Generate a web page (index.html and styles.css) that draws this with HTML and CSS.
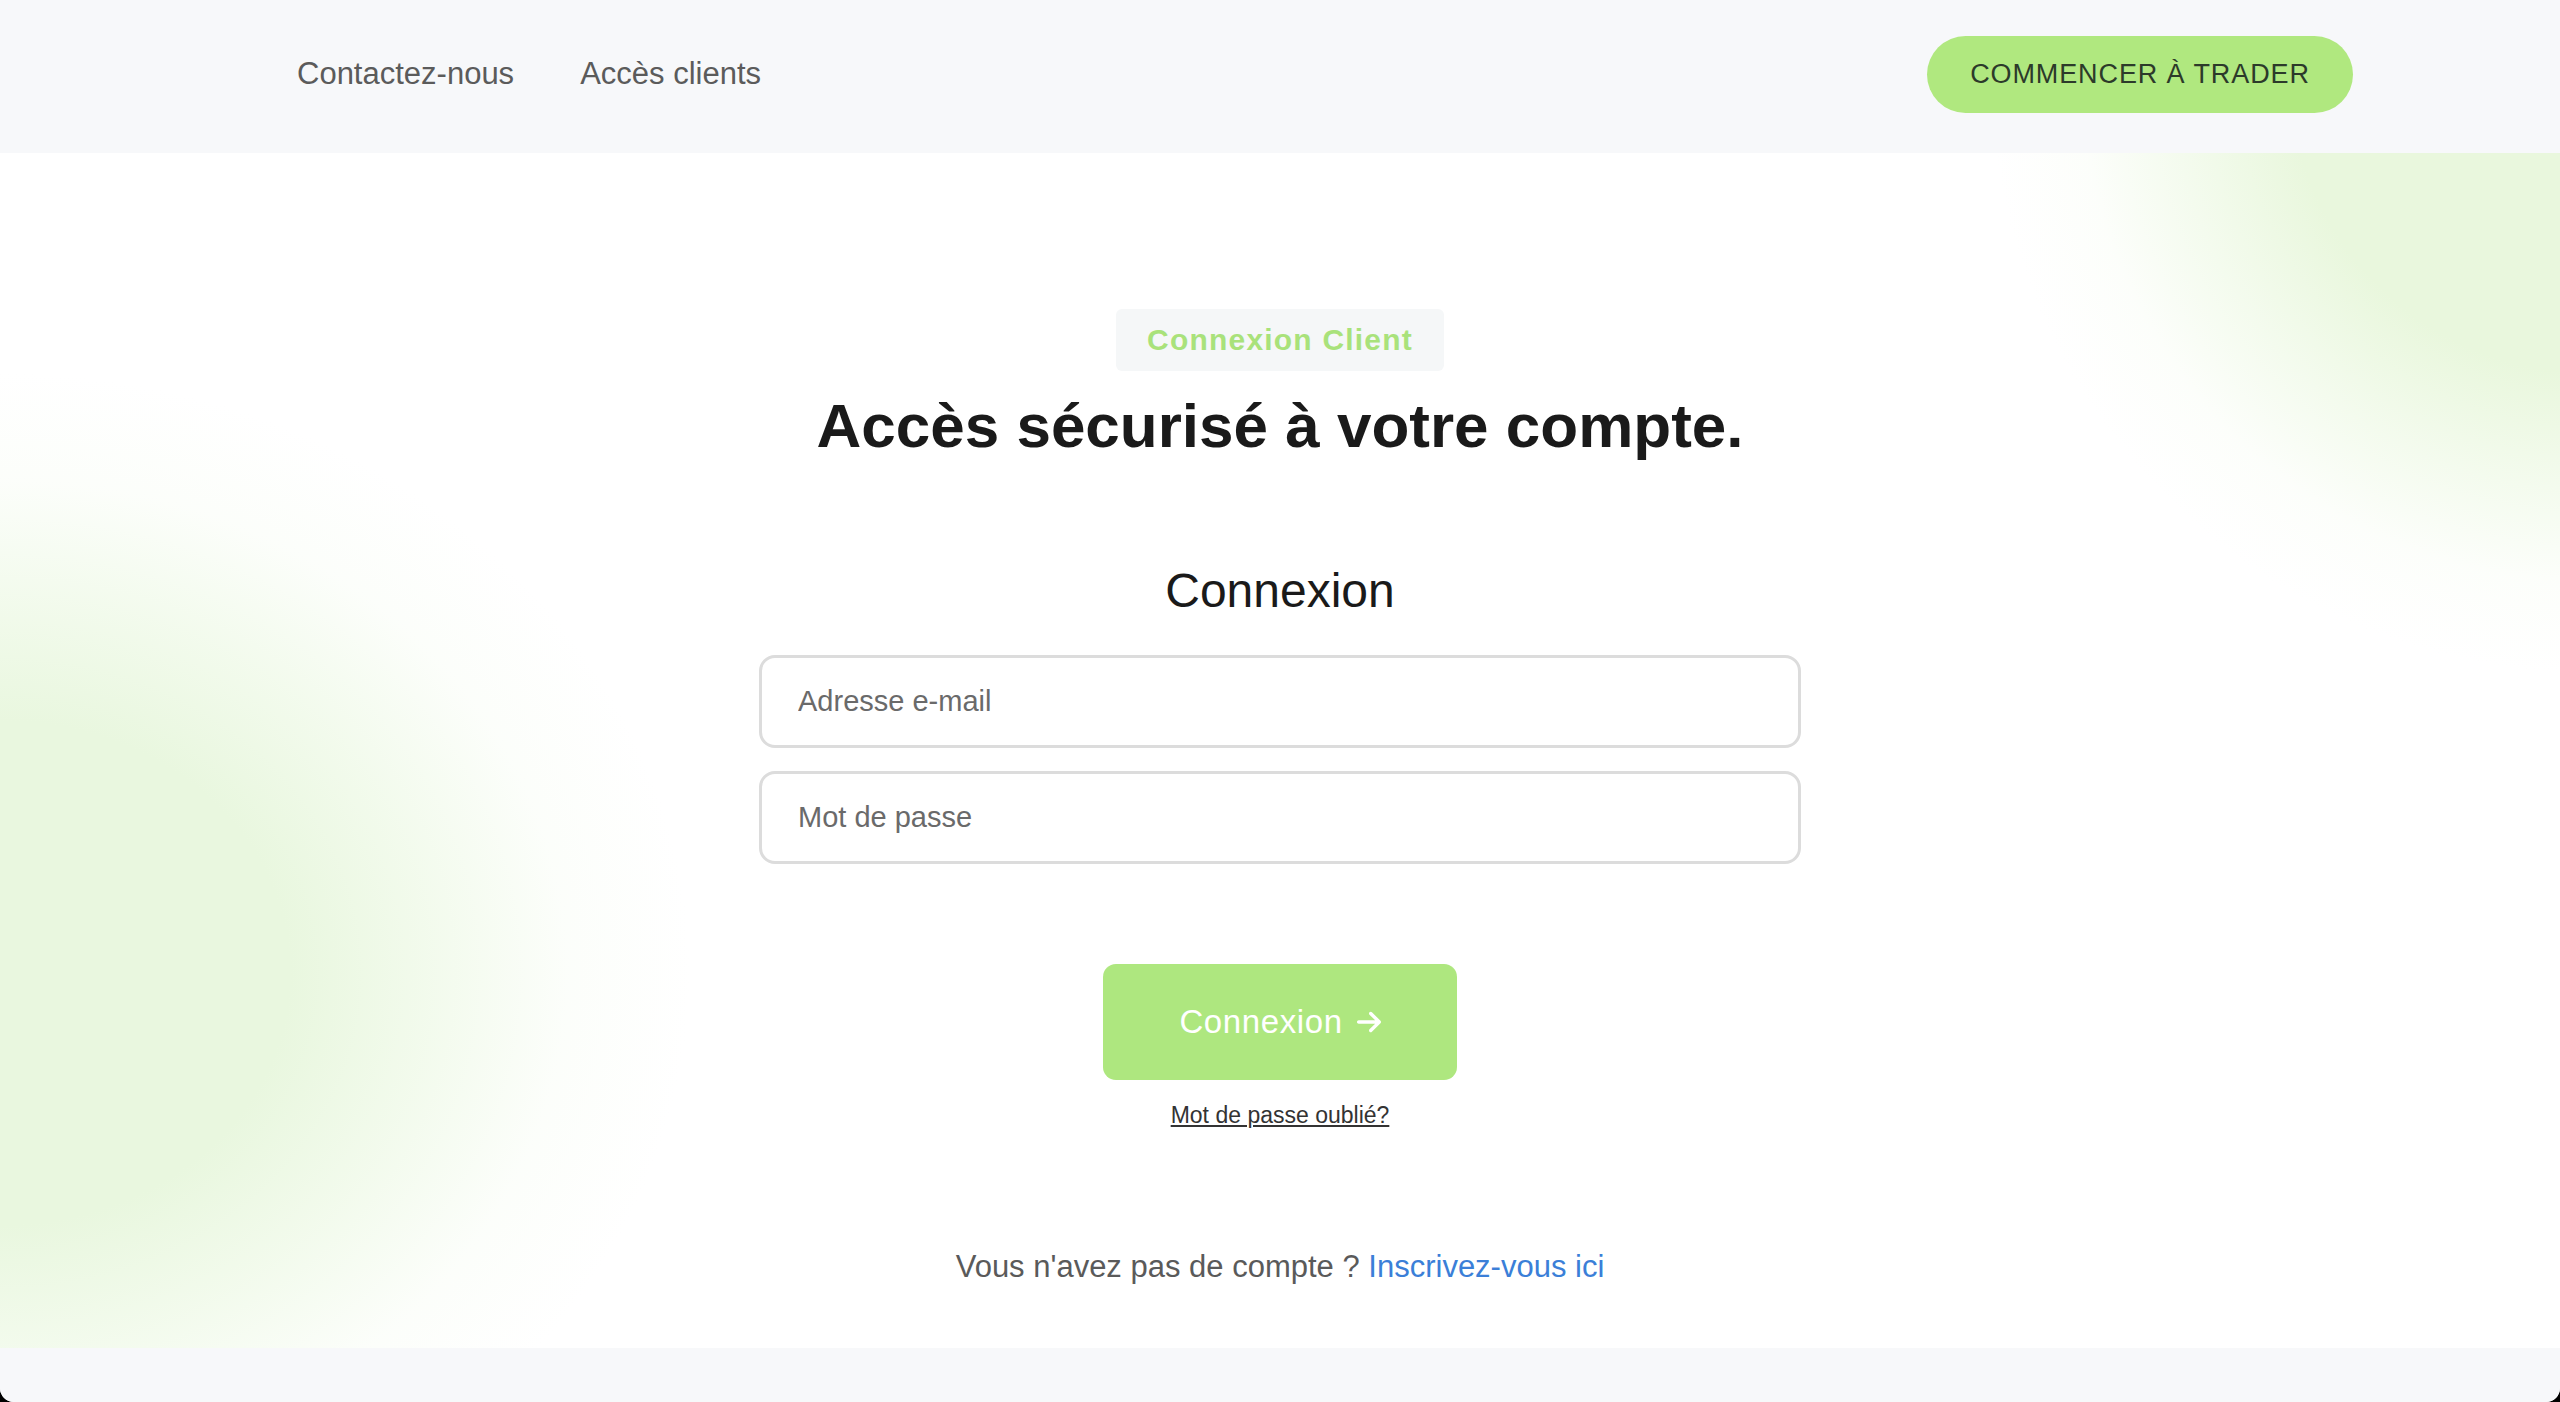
FILE: index.html
```html
<!DOCTYPE html>
<html lang="fr">
<head>
<meta charset="utf-8">
<title>Connexion Client</title>
<link rel="stylesheet" href="styles.css">
</head>
<body>
<div class="page">
  <header class="topbar">
    <nav class="nav">
      <a class="nav-link" href="#">Contactez-nous</a>
      <a class="nav-link" href="#">Accès clients</a>
    </nav>
    <a class="cta" href="#">COMMENCER À TRADER</a>
  </header>
  <main class="hero">
    <span class="badge">Connexion Client</span>
    <h1 class="title">Accès sécurisé à votre compte.</h1>
    <h2 class="subtitle">Connexion</h2>
    <form class="form">
      <input class="field" type="email" placeholder="Adresse e-mail">
      <input class="field" type="password" placeholder="Mot de passe">
      <button class="submit" type="button">Connexion
        <svg class="arrow" viewBox="0 0 448 512" aria-hidden="true"><path d="M438.6 278.6c12.5-12.5 12.5-32.8 0-45.3l-160-160c-12.5-12.5-32.8-12.5-45.3 0s-12.5 32.8 0 45.3L338.8 224 32 224c-17.7 0-32 14.3-32 32s14.3 32 32 32l306.7 0L233.4 393.4c-12.5 12.5-12.5 32.8 0 45.3s32.8 12.5 45.3 0l160-160z"/></svg>
      </button>
      <a class="forgot" href="#">Mot de passe oublié?</a>
    </form>
    <p class="signup">Vous n'avez pas de compte ? <a class="signup-link" href="#">Inscrivez-vous ici</a></p>
  </main>
  <footer class="footer"></footer>
</div>
</body>
</html>
```
FILE: styles.css
```css
* { box-sizing: border-box; }
html, body { margin: 0; padding: 0; background: #000; }
body { font-family: "Liberation Sans", Arial, Helvetica, sans-serif; }

.page {
  width: 2560px;
  height: 1402px;
  background: #f7f8fa;
  border-radius: 0 0 14px 14px;
  overflow: hidden;
  display: flex;
  flex-direction: column;
}

.topbar {
  height: 153px;
  flex: none;
  background: #f7f8fa;
  display: flex;
  align-items: center;
  justify-content: space-between;
  padding: 0 207px 5px 297px;
}
.nav { display: flex; gap: 66px; align-items: center; }
.nav-link {
  color: #5b5b5b;
  font-size: 31px;
  text-decoration: none;
}
.cta {
  display: inline-flex;
  align-items: center;
  justify-content: center;
  width: 426px;
  height: 77px;
  border-radius: 40px;
  background: #b0e87f;
  color: #2c3a2a;
  font-size: 27px;
  letter-spacing: 0.9px;
  text-decoration: none;
}

.hero {
  height: 1195px;
  flex: none;
  background-color: #fff;
  background-image:
    radial-gradient(ellipse 690px 600px at 0 820px, #e9f7df 0, #e9f7df 42%, rgba(238,249,230,0.75) 62%, rgba(246,252,242,0.35) 82%, rgba(255,255,255,0) 100%),
    radial-gradient(circle 600px at 2590px -80px, #e9f7dd 0, #e9f7dd 50%, rgba(238,249,229,0.7) 68%, rgba(246,252,241,0.3) 85%, rgba(255,255,255,0) 100%);
  display: flex;
  flex-direction: column;
  align-items: center;
  padding-top: 156px;
  text-align: center;
}
.badge {
  display: inline-block;
  height: 62px;
  line-height: 62px;
  padding: 0 31px;
  background: #f5f7f8;
  border-radius: 6px;
  color: #a9e27b;
  font-weight: 700;
  font-size: 30px;
  letter-spacing: 1.2px;
}
.title {
  margin: 18px 0 0;
  font-size: 62px;
  line-height: 74px;
  font-weight: 700;
  color: #1a1a1a;
}
.subtitle {
  margin: 99px 0 0;
  font-size: 48px;
  line-height: 58px;
  font-weight: 400;
  color: #1a1a1a;
}
.form {
  margin-top: 35px;
  display: flex;
  flex-direction: column;
  align-items: center;
  width: 1042px;
}
.field {
  width: 1042px;
  height: 93px;
  border: 3px solid #dcdcdc;
  border-radius: 16px;
  padding: 0 36px;
  font-family: inherit;
  font-size: 29px;
  color: #333;
  background: #fff;
  outline: none;
}
.field + .field { margin-top: 23px; }
.field::placeholder { color: #6a6a6a; }

.submit {
  margin-top: 100px;
  width: 354px;
  height: 116px;
  border: 0;
  border-radius: 13px;
  background: #aee77f;
  color: #fff;
  font-family: inherit;
  font-size: 33px;
  letter-spacing: 0.6px;
  display: flex;
  align-items: center;
  justify-content: center;
  gap: 14px;
  padding: 0;
}
.arrow { width: 24px; height: 28px; fill: #fff; }

.forgot {
  margin-top: 21px;
  font-size: 23px;
  line-height: 28px;
  color: #333;
  text-decoration: underline;
}
.signup {
  margin: 119px 0 0;
  font-size: 31px;
  line-height: 37px;
  color: #5a5a5a;
}
.signup-link { color: #3b7fd8; text-decoration: none; }

.footer { flex: 1; background: #f7f8fa; }
```
